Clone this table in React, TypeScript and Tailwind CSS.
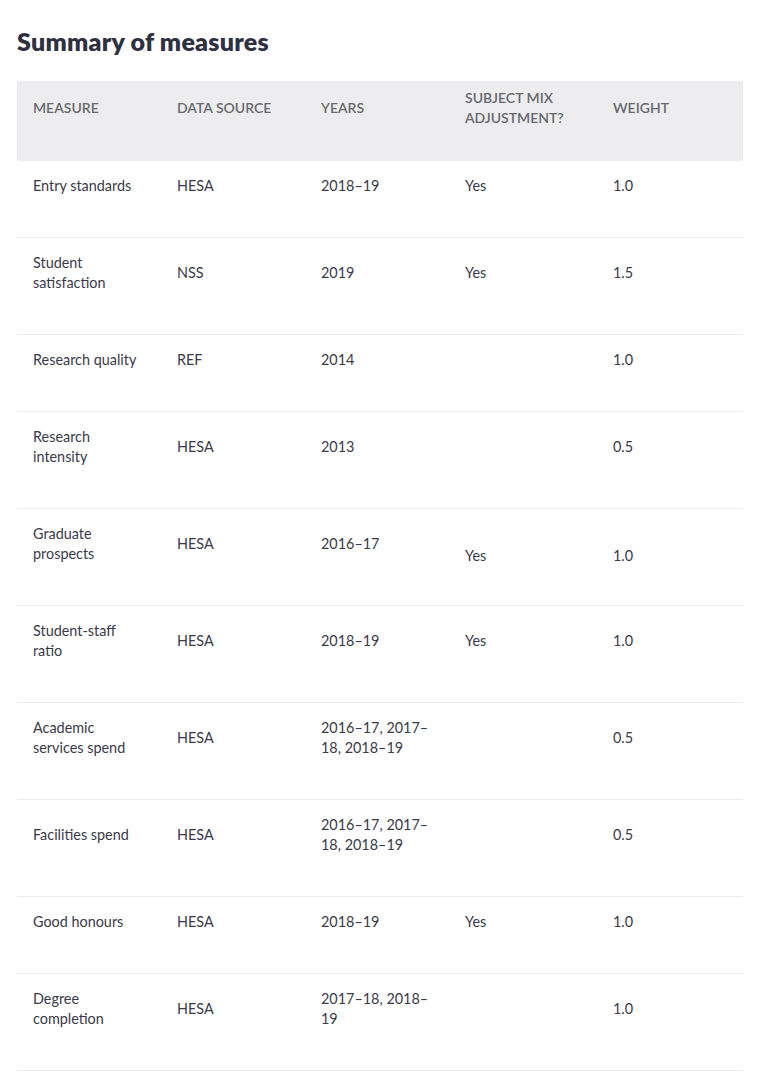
const rows: {
  measure: string;
  source: string;
  years: string;
  mix: string;
  weight: string;
  low?: boolean;
}[] = [
  { measure: "Entry standards", source: "HESA", years: "2018–19", mix: "Yes", weight: "1.0" },
  { measure: "Student satisfaction", source: "NSS", years: "2019", mix: "Yes", weight: "1.5" },
  { measure: "Research quality", source: "REF", years: "2014", mix: "", weight: "1.0" },
  { measure: "Research intensity", source: "HESA", years: "2013", mix: "", weight: "0.5" },
  { measure: "Graduate prospects", source: "HESA", years: "2016–17", mix: "Yes", weight: "1.0", low: true },
  { measure: "Student-staff ratio", source: "HESA", years: "2018–19", mix: "Yes", weight: "1.0" },
  { measure: "Academic services spend", source: "HESA", years: "2016–17, 2017–18, 2018–19", mix: "", weight: "0.5" },
  { measure: "Facilities spend", source: "HESA", years: "2016–17, 2017–18, 2018–19", mix: "", weight: "0.5" },
  { measure: "Good honours", source: "HESA", years: "2018–19", mix: "Yes", weight: "1.0" },
  { measure: "Degree completion", source: "HESA", years: "2017–18, 2018–19", mix: "", weight: "1.0" },
];

const headers = ["Measure", "Data source", "Years", "Subject mix adjustment?", "Weight"];
const widths = ["w-[144px]", "w-[144px]", "w-[144px]", "w-[148px]", "w-[146px]"];

export default function App() {
  return (
    <div className="bg-white min-h-screen px-[17px] pt-[26px] font-['Lato','Liberation_Sans',sans-serif]">
      <h2 className="text-[25px] leading-[30px] font-extrabold text-[#2f3142] tracking-[0.25px]">
        Summary of measures
      </h2>

      <table className="mt-[25px] w-[726px] table-fixed border-collapse text-[14.4px] leading-5">
        <colgroup>
          {widths.map((w, i) => (
            <col key={i} className={w} />
          ))}
        </colgroup>
        <thead>
          <tr className="bg-[#ededef]">
            {headers.map((h) => (
              <th
                key={h}
                className="px-4 pt-[7px] pb-[33px] text-left align-middle text-[14px] font-semibold uppercase text-[#68686e]"
              >
                {h}
              </th>
            ))}
          </tr>
        </thead>
        <tbody className="text-[#3a3a4a]">
          {rows.map((r) => (
            <tr key={r.measure} className="border-b border-[#ececec]">
              <td className="px-4 pt-[15px] pb-[41px] align-middle">{r.measure}</td>
              <td className="px-4 pt-[15px] pb-[41px] align-middle">{r.source}</td>
              <td className="px-4 pt-[15px] pb-[41px] align-middle">{r.years}</td>
              <td className={`px-4 pt-[15px] align-middle ${r.low ? "pb-[17px]" : "pb-[41px]"}`}>{r.mix}</td>
              <td className={`px-4 pt-[15px] align-middle ${r.low ? "pb-[17px]" : "pb-[41px]"}`}>{r.weight}</td>
            </tr>
          ))}
        </tbody>
      </table>
    </div>
  );
}
